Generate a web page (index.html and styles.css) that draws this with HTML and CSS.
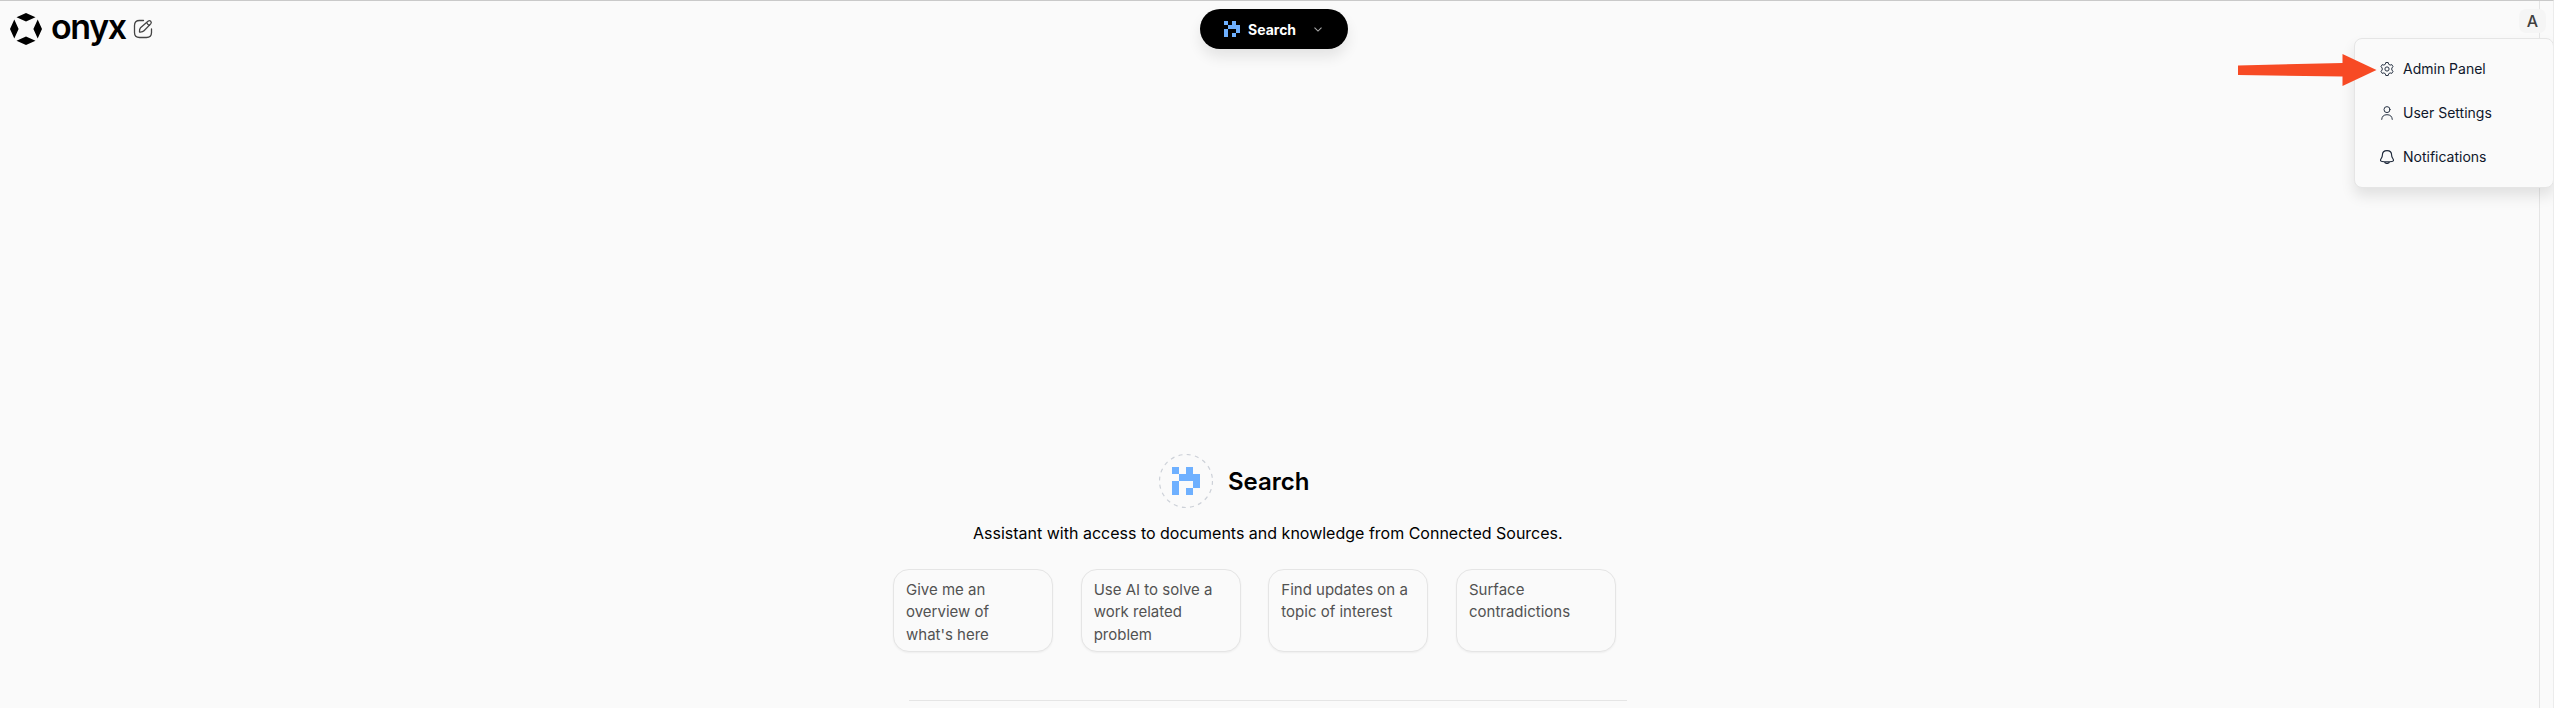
FILE: index.html
```html
<!DOCTYPE html>
<html lang="en">
<head>
<meta charset="utf-8">
<title>Onyx</title>
<link rel="stylesheet" href="styles.css">
</head>
<body>
<svg class="defs" width="0" height="0" aria-hidden="true">
  <symbol id="pixels" viewBox="0 0 4 4" shape-rendering="crispEdges">
    <path fill="#6eb0ff" d="M0 0h1v1H0zM2 0h1v1h1v2H3V2H1V1h1zM0 2h1v2H0zM2 3h1v1H2z"/>
  </symbol>
</svg>
<div class="page">
  <header class="topbar">
    <div class="brand">
      <svg class="mark" viewBox="0 0 32 32"><path d="M16 0l9.500 4.300L16 8.600 6.500 4.300zM16 23.400l9.500 4.300L16 32l-9.500-4.300zM4.300 6.500L8.600 16l-4.300 9.500L0 16zM27.700 6.500L32 16l-4.300 9.500L23.400 16z"/></svg>
      <span class="wordmark">onyx</span>
      <svg class="edit" viewBox="0 0 20 20" fill="none" stroke="#444" stroke-width="1.300" stroke-linecap="round" stroke-linejoin="round"><path d="M10.500 1.500H6.500Q1.500 1.500 1.500 6.500v7q0 5 5 5h7q5 0 5-5V10M15 2.200q1.500-1.200 2.700 0t0 2.700L11 11.800q-1.500 1.500-4.500 1.200-.2-3 1-4.300zM13.700 3.600q.8 2.200 3 2.800"/></svg>
    </div>
    <button class="picker"><svg class="picker-icon"><use href="#pixels"/></svg><span class="picker-label">Search</span><svg class="chevron" viewBox="0 0 8 5" fill="none" stroke="#aaa" stroke-width="1.100"><path d="M.5.700L4 4.100 7.500.700"/></svg></button>
    <div class="account">A</div>
  </header>
  <main class="hero">
    <div class="title-row">
      <div class="badge">
        <svg class="ring" viewBox="0 0 54 54"><circle cx="27" cy="27" r="26.500" fill="none" stroke="#cdd1d8" stroke-width="1.200" stroke-dasharray="4 4.320"/></svg>
        <svg class="badge-icon"><use href="#pixels"/></svg>
      </div>
      <h1 class="title">Search</h1>
    </div>
    <p class="tagline">Assistant with access to documents and knowledge from Connected Sources.</p>
    <div class="cards">
      <button class="card">Give me an<br>overview of<br>what's here</button>
      <button class="card">Use AI to solve a<br>work related<br>problem</button>
      <button class="card">Find updates on a<br>topic of interest</button>
      <button class="card">Surface<br>contradictions</button>
    </div>
    <div class="divider"></div>
  </main>
  <nav class="menu">
    <a class="item"><svg class="item-icon" viewBox="0 0 14 14" fill="none" stroke="#1e293b" stroke-width=".95" stroke-linejoin="round"><path d="M5.800.5h2.400l.4 1.700 1.500.9 1.700-.5L13 4.700 11.800 6v2L13 9.300l-1.200 2.100-1.700-.5-1.500.9-.4 1.700H5.800l-.4-1.700-1.500-.9-1.700.5L1 9.300 2.200 8V6L1 4.700l1.200-2.100 1.700.5 1.500-.9z"/><circle cx="7" cy="7" r="2.100"/></svg>Admin Panel</a>
    <a class="item"><svg class="item-icon" viewBox="0 0 14 14" fill="none" stroke="#1e293b" stroke-width=".95" stroke-linecap="round"><circle cx="7" cy="3.600" r="3"/><path d="M1.700 13.400q.3-4.700 5.300-4.700t5.300 4.700"/></svg>User Settings</a>
    <a class="item"><svg class="item-icon" viewBox="0 0 14 14" fill="none" stroke="#1e293b" stroke-width="1.150" stroke-linejoin="round"><path d="M7 .6C4.200.6 2.400 2.500 2.400 5c0 3-1.900 3.700-1.900 5.300 0 .8.700 1.100 1.500 1.200 3 .5 7 .5 10 0 .8-.1 1.500-.4 1.500-1.200 0-1.600-1.900-2.300-1.900-5.300 0-2.500-1.800-4.400-4.600-4.400zM4.400 11.900q.6 1.600 2.600 1.600t2.600-1.600"/></svg>Notifications</a>
  </nav>
  <svg class="arrow" viewBox="0 0 139 32"><path fill="#f74a24" d="M0 11.500L104.500 9V0L138.500 16 104.500 32V22.500L0 21z"/></svg>
</div>
</body>
</html>
```
FILE: styles.css
```css
* { box-sizing: border-box; }
body { margin: 0; font-family: Inter, "Liberation Sans", sans-serif; background: #fafafa; color: #000; }
button { font: inherit; border: 0; padding: 0; text-align: left; }
.defs { position: absolute; }
.page { position: relative; height: 708px; overflow: hidden; border-top: 1px solid #c9c9c9; border-right: 1px solid #ececec; background: linear-gradient(#e5e5e5, #e5e5e5) right 13px top / 1px 100% no-repeat; }
.topbar { display: grid; grid-template-columns: 1190px 148px 1fr; align-items: start; padding: 8px 7px 0 10px; height: 58px; }
.brand { display: flex; align-items: flex-start; padding-top: 4px; }
.mark { width: 32px; height: 32px; }
.wordmark { margin-left: 9px; width: 73px; font-size: 34px; line-height: 28px; font-weight: 600; letter-spacing: -1.400px; white-space: nowrap; }
.edit { width: 20px; height: 20px; margin: 6px 0 0 9px; }
.picker { display: flex; align-items: center; width: 148px; height: 40px; padding-left: 24px; border-radius: 20px; background: #000; color: #fff; box-shadow: 0 8px 14px rgba(0,0,0,.09); }
.picker-icon { width: 16px; height: 16px; }
.picker-label { width: 48px; margin-left: 8px; font-size: 14px; font-weight: 700; white-space: nowrap; }
.chevron { width: 8px; height: 5px; margin-left: 18px; }
.account { justify-self: end; width: 27px; height: 24px; border-radius: 7px; background: #f5f5f5; color: #404040; font-size: 16px; font-weight: 500; line-height: 24px; text-align: center; }
.hero { display: flex; flex-direction: column; width: 723px; margin: 395px 0 0 893px; }
.title-row { display: flex; align-items: center; height: 54px; padding-left: 266px; gap: 15px; }
.badge { display: grid; place-items: center; width: 54px; height: 54px; }
.badge > * { grid-area: 1 / 1; }
.ring { width: 54px; height: 54px; }
.badge-icon { width: 28px; height: 28px; }
.title { margin: 0; padding-top: 2px; font-size: 24px; line-height: 32px; font-weight: 600; }
.tagline { margin: 13px 0 0 80px; font-size: 16px; line-height: 24px; white-space: nowrap; }
.cards { display: grid; grid-template-columns: repeat(4, 160px); justify-content: space-between; margin-top: 24px; }
.card { display: flex; align-items: flex-start; height: 83px; padding: 9px 12px; border: 1px solid #e5e5e5; border-radius: 16px; background: #fafafa; color: #525252; font-size: 15px; line-height: 22.400px; white-space: nowrap; box-shadow: 0 1px 2px rgba(0,0,0,.05); }
.divider { height: 1px; width: 718px; margin: 48px 0 0 16px; background: #e5e5e5; }
.menu { position: absolute; top: 37px; right: -1px; width: 200px; height: 150px; padding: 7px 0; border: 1px solid #e5e5e5; border-radius: 8px; background: #fafafa; box-shadow: 0 8px 14px rgba(0,0,0,.1); }
.item { display: flex; align-items: center; height: 44px; padding-left: 25px; gap: 9px; font-size: 14px; color: #0f172a; white-space: nowrap; }
.item-icon { width: 14px; height: 14px; margin-top: 1px; }
.arrow { position: absolute; left: 2238px; top: 53px; width: 139px; height: 32px; }
```
